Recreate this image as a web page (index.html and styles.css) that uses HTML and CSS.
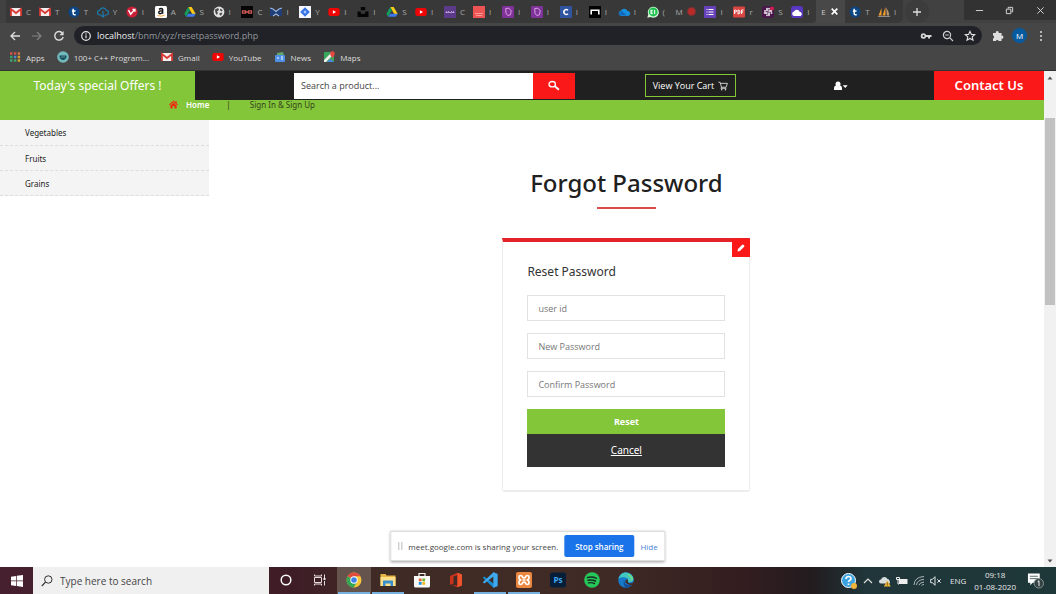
FILE: index.html
```html
<!DOCTYPE html>
<html lang="en">
<head>
<meta charset="utf-8">
<meta name="viewport" content="width=device-width, initial-scale=1">
<title>Forgot Password</title>
<link rel="stylesheet" href="styles.css">
</head>
<body>
<svg class="defs" aria-hidden="true">
  <symbol id="gmail" viewBox="0 0 12 12"><rect x="1" y="2" width="10" height="8" rx="1" fill="#f4eeee"/><path d="M1 10V3l5 4 5-4v7" fill="none" stroke="#d93a36" stroke-width="1.8"/></symbol>
  <symbol id="tcircle" viewBox="0 0 12 12"><circle cx="6" cy="6" r="5.5" fill="#0d4685"/><path d="M5.2 2.8v4.7q0 1.3 1.3 1.3h1.2M3.9 5h3.6" fill="none" stroke="#fff" stroke-width="1.5"/></symbol>
  <symbol id="clouddown" viewBox="0 0 12 12"><path d="M4 9H3a2.4 2.4 0 0 1-.2-4.8 3.3 3.3 0 0 1 6.3 0A2.4 2.4 0 0 1 9 9H8M6 5v6M4.3 9.3 6 11l1.7-1.7" fill="none" stroke="#1a80b6" stroke-width="1.1"/></symbol>
  <symbol id="vred" viewBox="0 0 12 12"><circle cx="6" cy="6" r="5.6" fill="#c91f37"/><path d="m2.5 4.2 2.2 4 4-4.8M6.500 3.400h2.400v2.400" fill="none" stroke="#fff" stroke-width="1.4"/></symbol>
  <symbol id="amazon" viewBox="0 0 12 12"><rect width="12" height="12" rx="1.5" fill="#fff"/><path d="M4 3.400Q6.500 1.500 7.600 3.300v4.500M7.500 4.800q-4-.2-3.700 1.900.7 2 3.700-.2" fill="none" stroke="#111" stroke-width="1.5"/><path d="M2.500 9.500q3.500 1.500 7-.2" fill="none" stroke="#f29a22" stroke-width=".9"/></symbol>
  <symbol id="drive" viewBox="0 0 12 12"><path d="M4.200 1h3.500l4 7H8.200z" fill="#fbc916"/><path d="M4.200 1 .3 7.700l1.800 3.100L6 4.200z" fill="#159a5b"/><path d="M4.200 7.700h7.500l-1.800 3.100H2.100z" fill="#3c78e8"/></symbol>
  <symbol id="globe" viewBox="0 0 12 12"><circle cx="6" cy="6" r="5.4" fill="#e1e1e1"/><path d="M2 3.500 5 2l1 2-2 1.500L5 7 3.700 9 2.300 6.500zM7 2.500 9.700 4 8.800 5.500 7.300 4.700zM6.500 7 9.500 6.700 8 9.700 6.700 9z" fill="#48494a"/></symbol>
  <symbol id="blackred" viewBox="0 0 12 12"><rect width="12" height="12" fill="#050505"/><path d="M1.500 4.900h3v2.200h-3zM7.500 4.900h3v2.200h-3zM4.500 6h3" fill="none" stroke="#cf5b57" stroke-width="1.3"/></symbol>
  <symbol id="bluefold" viewBox="0 0 12 12"><path d="M0 2h2l4 3 4-3h2v8H8L6 8l-2 2H0z" fill="#203e77"/><path d="m0 2 3 1 3 2.500L9 3l3-1M3 10l3-2 3 2" fill="none" stroke="#9fb8de" stroke-width="1.1"/></symbol>
  <symbol id="jira" viewBox="0 0 12 12"><rect width="12" height="12" fill="#f4f7ff"/><path d="m6 1.200 4.800 4.800L6 10.800 1.200 6z" fill="#3472e4"/><path d="m6 4.300 1.700 1.700L6 7.700 4.300 6z" fill="#a9c6ff"/></symbol>
  <symbol id="youtube" viewBox="0 0 12 12"><rect x="0.300" y="2" width="11.400" height="8" rx="2" fill="#f00505"/><path d="m4.900 4.200 3.200 1.800-3.200 1.800z" fill="#fff"/></symbol>
  <symbol id="unsplash" viewBox="0 0 12 12"><path d="M3.800 1h4.400v3.300H3.800zM.5 5.400h3.300v2.300h4.400V5.400h3.300V11H.5z" fill="#050505"/></symbol>
  <symbol id="purple" viewBox="0 0 12 12"><rect width="12" height="12" fill="#5b3b89"/><path d="M1.500 6.500h9M2 5.500h1m1 0h1m2 0h1m1 0h1" stroke="#b39bd2" stroke-width="1.2"/></symbol>
  <symbol id="redsheet" viewBox="0 0 12 12"><rect width="12" height="12" fill="#ef5455"/><path d="M2 7.500h8M3 9.500h6" stroke="#ff9a98"/></symbol>
  <symbol id="bookmark" viewBox="0 0 12 12"><rect width="12" height="12" rx="1" fill="#7f3298"/><path d="m3.700 2.500 3.200-.3 2.300 2.600-.7 4-2.700.7-1.800-2.300z" fill="none" stroke="#dba1e8"/></symbol>
  <symbol id="cblue" viewBox="0 0 12 12"><rect width="12" height="12" rx="1" fill="#3154a1"/><path d="M8 4.300a2.400 2.400 0 1 0 0 3.400" fill="none" stroke="#fff" stroke-width="1.5"/></symbol>
  <symbol id="arch" viewBox="0 0 12 12"><rect width="12" height="12" fill="#030303"/><path d="M2.200 8.600V4.300h7.600v4.300" fill="none" stroke="#fff" stroke-width="1.6"/></symbol>
  <symbol id="onedrive" viewBox="0 0 12 12"><path d="M2.800 10a2.700 2.700 0 0 1 0-5.300A3.700 3.700 0 0 1 9.500 5 2.500 2.500 0 0 1 9.700 10z" fill="#168fdf"/><path d="m4 5 5 4.500H3A2.400 2.400 0 0 1 1 7z" fill="#1368bb"/></symbol>
  <symbol id="whatsapp" viewBox="0 0 12 12"><path d="m.3 11.700 1-3.200A5.500 5.500 0 1 1 3.500 11z" fill="#d9f9dc"/><circle cx="6.200" cy="5.900" r="4.500" fill="#20c251"/><path d="M4 4v4M4 4.300h1.700M4 6h1.500M4 7.700h1.700M7.700 4v4" stroke="#fff"/></symbol>
  <symbol id="list" viewBox="0 0 12 12"><rect width="12" height="12" rx="1" fill="#6540b8"/><path d="M2.500 3.500h1m1 0h5m-7 2.500h1m1 0h5m-7 2.500h1m1 0h5" stroke="#fff" stroke-width="1.2"/></symbol>
  <symbol id="pdf" viewBox="0 0 12 12"><rect y=".5" width="12" height="11" rx="1" fill="#d94542"/><path d="M1.600 8V4h1q1 .1 1 1t-1 1h-1M5 4v4q2 0 2-2T5 4M8.600 8V4h2m-2 2h1.500" fill="none" stroke="#fff"/></symbol>
  <symbol id="slack" viewBox="0 0 12 12"><rect width="12" height="12" rx="3" fill="#4a154b"/><circle cx="10" cy="2.500" r="2" fill="#d51f4a"/><path d="M5 2.500v2.300M2.500 7H5M7 9.500V7M9.500 5H7M2.700 4.900h.6M7 2.500v.6M9.200 7h.5M5 9v.5" stroke="#fff" stroke-width="1.500" stroke-linecap="round"/></symbol>
  <symbol id="pcloud" viewBox="0 0 12 12"><rect width="12" height="12" rx="3" fill="#5937c2"/><path d="M3 10a2.300 2.300 0 0 1 0-4.500 3 3 0 0 1 5.600.3A2.200 2.200 0 0 1 9.500 10z" fill="#fff"/></symbol>
  <symbol id="sails" viewBox="0 0 12 12"><path d="M3.500 2v7.500H.5zM7.500 1v8.500h-3z" fill="#f49c28"/><path d="M8.300 1.500q2.500 4 3 8H8.800z" fill="#b99874"/><path d="M0 10.500h12" stroke="#8e8e8e"/></symbol>
</svg>

<header class="browser">
  <div class="tabstrip">
    <div class="tabs">
      <div class="tab"><svg><use href="#gmail"/></svg><span>C</span></div>
      <div class="tab"><svg><use href="#gmail"/></svg><span>T</span></div>
      <div class="tab"><svg><use href="#tcircle"/></svg><span>T</span></div>
      <div class="tab"><svg><use href="#clouddown"/></svg><span>Y</span></div>
      <div class="tab"><svg><use href="#vred"/></svg><span>I</span></div>
      <div class="tab"><svg><use href="#amazon"/></svg><span>A</span></div>
      <div class="tab"><svg><use href="#drive"/></svg><span>S</span></div>
      <div class="tab"><svg><use href="#globe"/></svg><span>I</span></div>
      <div class="tab"><svg><use href="#blackred"/></svg><span>C</span></div>
      <div class="tab"><svg><use href="#bluefold"/></svg><span>I</span></div>
      <div class="tab"><svg><use href="#jira"/></svg><span>Y</span></div>
      <div class="tab"><svg><use href="#youtube"/></svg><span>I</span></div>
      <div class="tab"><svg><use href="#unsplash"/></svg><span>I</span></div>
      <div class="tab"><svg><use href="#drive"/></svg><span>S</span></div>
      <div class="tab"><svg><use href="#youtube"/></svg><span>I</span></div>
      <div class="tab"><svg><use href="#purple"/></svg><span>C</span></div>
      <div class="tab"><svg><use href="#redsheet"/></svg><span>I</span></div>
      <div class="tab"><svg><use href="#bookmark"/></svg><span>I</span></div>
      <div class="tab"><svg><use href="#bookmark"/></svg><span>I</span></div>
      <div class="tab"><svg><use href="#cblue"/></svg><span>I</span></div>
      <div class="tab"><svg><use href="#arch"/></svg><span>I</span></div>
      <div class="tab"><svg><use href="#onedrive"/></svg><span>I</span></div>
      <div class="tab"><svg><use href="#whatsapp"/></svg><span>(</span></div>
      <div class="tab"><span>M</span><i class="recording"></i></div>
      <div class="tab"><svg><use href="#list"/></svg><span>I</span></div>
      <div class="tab"><svg><use href="#pdf"/></svg><span>r</span></div>
      <div class="tab"><svg><use href="#slack"/></svg><span>S</span></div>
      <div class="tab last"><svg><use href="#pcloud"/></svg><span>I</span></div>
      <div class="tab active"><span>E</span><button class="close" aria-label="Close tab"><svg viewBox="0 0 8 8"><path d="m1.500 1.500 5 5m0-5-5 5" fill="none" stroke="#fff" stroke-width="1.500"/></svg></button></div>
      <div class="tab"><svg><use href="#tcircle"/></svg><span>T</span></div>
      <div class="tab last"><svg><use href="#sails"/></svg><span>I</span></div>
    </div>
    <button class="newtab" aria-label="New tab"><svg viewBox="0 0 10 10"><path d="M5 1v8M1 5h8" stroke="#ddd" stroke-width="1.300"/></svg></button>
    <div class="window-controls">
      <button aria-label="Minimize"><svg viewBox="0 0 10 10"><path d="M1 5h8" stroke="#ddd"/></svg></button>
      <button aria-label="Restore"><svg viewBox="0 0 10 10"><path d="M1.500 3.500h5v5h-5zM3.500 3V1.500h5v5H7" fill="none" stroke="#e2e2e2"/></svg></button>
      <button aria-label="Close"><svg viewBox="0 0 10 10"><path d="m1.500 1.500 7 7m0-7-7 7" stroke="#e2e2e2"/></svg></button>
    </div>
  </div>
  <div class="toolbar">
    <button aria-label="Back"><svg viewBox="0 0 12 12"><path d="M11 6H2m4-4L2 6l4 4" fill="none" stroke="#dedede" stroke-width="1.300"/></svg></button>
    <button aria-label="Forward"><svg viewBox="0 0 12 12"><path d="M1 6h9M6 2l4 4-4 4" fill="none" stroke="#818181" stroke-width="1.200"/></svg></button>
    <button aria-label="Reload"><svg viewBox="0 0 12 12"><path d="M9.500 3.200A4.300 4.300 0 1 0 10.200 7" fill="none" stroke="#dedede" stroke-width="1.400"/><path d="M10.600 1v4.200H6.400z" fill="#dedede"/></svg></button>
    <div class="address">
      <svg viewBox="0 0 12 12"><circle cx="6" cy="6" r="4.300" fill="none" stroke="#e6e6e6" stroke-width="1.200"/><path d="M6 5.300v3M6 3.300v1.200" stroke="#e6e6e6" stroke-width="1.200"/></svg>
      <span class="url"><b>localhost</b>/bnm/xyz/resetpassword.php</span>
      <button aria-label="Passwords"><svg viewBox="0 0 12 12"><path d="M3.500 3.200a2.800 2.800 0 1 0 2.600 3.700H8v1.700h2V6.900h1.500V5.100H6.100a2.800 2.800 0 0 0-2.600-1.900zm0 1.800a1 1 0 1 1 0 2 1 1 0 0 1 0-2z" fill="#d6d6d6"/></svg></button>
      <button aria-label="Zoom"><svg viewBox="0 0 12 12"><circle cx="5" cy="5" r="3.600" fill="none" stroke="#d0d0d0" stroke-width="1.200"/><path d="m7.700 7.700 3.300 3.300M3.300 5h3.400" stroke="#d0d0d0" stroke-width="1.200"/></svg></button>
      <button aria-label="Bookmark"><svg viewBox="0 0 12 12"><path d="m6 1.400 1.400 3 3.300.3-2.500 2.200.8 3.300L6 8.500l-3 1.700.8-3.300-2.500-2.200 3.300-.3z" fill="none" stroke="#e3e3e3" stroke-width="1.100"/></svg></button>
    </div>
    <button aria-label="Extensions"><svg viewBox="0 0 12 12"><path d="M1 3h2.800a1.500 1.500 0 1 1 2.900 0H9.500v2.700a1.500 1.500 0 1 1 0 2.900V11H6.800a1.600 1.600 0 0 0-3 0H1V8.400a1.500 1.500 0 0 0 0-2.900z" fill="#dedede"/></svg></button>
    <button class="profile" aria-label="Profile">M</button>
    <button aria-label="Menu"><svg viewBox="0 0 12 12"><g fill="#dedede"><circle cx="6" cy="2" r="1"/><circle cx="6" cy="6" r="1"/><circle cx="6" cy="10" r="1"/></g></svg></button>
  </div>
  <nav class="bookmarks" aria-label="Bookmarks">
    <a href="#apps"><svg viewBox="0 0 12 12"><path d="M1 2.500h2.500" stroke="#dc5146" stroke-width="2.400"/><path d="M4.900 2.500h2.400" stroke="#dc5146" stroke-width="2.400"/><path d="M8.700 2.500h2.400" stroke="#dc7546" stroke-width="2.400"/><path d="M1 6h2.500" stroke="#31a66a" stroke-width="2.400"/><path d="M4.900 6h2.400" stroke="#5086d4" stroke-width="2.400"/><path d="M8.700 6h2.400M8.700 9.500h2.400" stroke="#d5a22f" stroke-width="2.400"/><path d="M1 9.500h2.500M4.900 9.500h2.400" stroke="#44a26c" stroke-width="2.400"/></svg>Apps</a>
    <a href="#programs"><svg viewBox="0 0 12 12"><circle cx="6" cy="6" r="5.800" fill="#72b9bd"/><path d="M2.500 4.500h7v1.200Q8.500 9 6 9T2.500 5.700z" fill="#174e5b"/><path d="M4 6h4" stroke="#5b949c"/></svg>100+ C++ Program...</a>
    <a href="#gmail-link"><svg><use href="#gmail"/></svg>Gmail</a>
    <a href="#youtube-link"><svg><use href="#youtube"/></svg>YouTube</a>
    <a href="#news"><svg viewBox="0 0 12 12"><path d="m3 2 6-1 1 4H3z" fill="#63a66b"/><rect x="1" y="4" width="10" height="7" rx="1" fill="#4f8fe6"/><path d="M3 7h2m2-1h2M7 8h2" stroke="#fff"/></svg>News</a>
    <a href="#maps"><svg viewBox="0 0 12 12"><rect x="1" y="1" width="10" height="10" rx="1" fill="#38a65c"/><path d="m1 9 8-8 2 2-8 8H1z" fill="#eeeeea"/><path d="m4 11 3-3 4 3z" fill="#4c86e2"/><path d="M9.500 7Q7 4 7 2.700a2.400 2.400 0 0 1 4.800 0Q11.800 4 9.500 7" fill="#e54840"/></svg>Maps</a>
  </nav>
</header>

<div class="viewport">
  <div class="site">
    <header class="topbar">
      <a class="offers" href="#offers">Today's special Offers !</a>
      <form class="search" role="search">
        <input type="search" aria-label="Search a product" placeholder="Search a product...">
        <button type="button" aria-label="Search"><svg viewBox="0 0 12 12"><ellipse cx="4.200" cy="4.200" rx="3.200" ry="2.700" fill="none" stroke="#fff" stroke-width="1.300"/><path d="m6.600 6 4.300 3.800" stroke="#fff" stroke-width="1.900"/></svg></button>
      </form>
      <button class="cart">View Your Cart <svg viewBox="0 0 12 12"><path d="M.5 1.500h2l1.700 6h5.500l1.600-4.700H3M4.200 7.500l-.8 1.300h6.700" fill="none" stroke="#e8e8e8"/><circle cx="4.500" cy="10.400" r=".9" fill="#e8e8e8"/><circle cx="9" cy="10.400" r=".9" fill="#e8e8e8"/></svg></button>
      <button class="account" aria-label="Account"><svg viewBox="0 0 14 10"><circle cx="4" cy="3" r="2.500" fill="#fff"/><path d="M0 9V7q0-2.300 2-2.500 2 1.600 4 0 2 .2 2 2.500v2zM8.700 4.200h5l-2.500 2.700z" fill="#fff"/></svg></button>
      <a class="contact" href="#contact">Contact Us</a>
    </header>
    <nav class="crumbs" aria-label="Breadcrumb">
      <svg viewBox="0 0 10 9"><path d="M5 0 0 4.500l.8.8L5 1.600l4.200 3.700.8-.8L8.500 3V.6H7.200v1.300zM1.500 5.500 5 2.500l3.500 3V9H6V6.300H4V9H1.500z" fill="#ef2812"/></svg>
      <a class="home" href="#home">Home</a><span class="divider">|</span><a href="#signin">Sign In &amp; Sign Up</a>
    </nav>
    <div class="columns">
      <nav class="categories" aria-label="Categories">
        <a href="#vegetables">Vegetables</a>
        <a href="#fruits">Fruits</a>
        <a href="#grains">Grains</a>
      </nav>
      <main>
        <h1>Forgot Password</h1>
        <section class="card">
          <span class="edit"><svg viewBox="0 0 10 10"><path d="m.7 9.300.5-3L6.500 1q.8-.7 1.500 0L9 2q.7.800 0 1.500L3.700 8.800z" fill="#fff"/></svg></span>
          <h2>Reset Password</h2>
          <form>
            <input type="text" aria-label="user id" placeholder="user id">
            <input type="password" aria-label="New Password" placeholder="New Password">
            <input type="password" aria-label="Confirm Password" placeholder="Confirm Password">
            <button class="reset" type="button">Reset</button>
            <div class="cancel"><a href="#cancel">Cancel</a></div>
          </form>
        </section>
      </main>
    </div>
  </div>
  <div class="scrollbar" aria-hidden="true">
    <svg viewBox="0 0 6 6"><path d="m.5 4.500 2.500-3 2.500 3z" fill="#505050"/></svg>
    <div class="track"><div class="thumb"></div></div>
    <svg viewBox="0 0 6 6"><path d="m.5 1.500 2.500 3 2.500-3z" fill="#505050"/></svg>
  </div>
  <div class="sharing" role="status">
    <i class="grip"></i><span>meet.google.com is sharing your screen.</span>
    <button class="stop">Stop sharing</button><button class="hide">Hide</button>
  </div>
</div>

<footer class="taskbar">
  <button class="start" aria-label="Start"><svg viewBox="0 0 12 12"><path d="m0 1.700 5.200-.8v4.700H0zM5.900.8 12 0v5.600H5.900zM0 6.300h5.200V11L0 10.300zM5.900 6.300H12V12l-6.100-.9z" fill="#fff"/></svg></button>
  <label class="tasksearch"><svg viewBox="0 0 12 12"><circle cx="7.300" cy="4.500" r="3.700" fill="none" stroke="#303030"/><path d="M4.500 7.200.8 11" stroke="#303030" stroke-width="1.200"/></svg><input type="search" aria-label="Type here to search" placeholder="Type here to search"></label>
  <div class="apps">
    <button aria-label="Cortana"><svg viewBox="0 0 16 16"><circle cx="8" cy="8" r="4.800" fill="none" stroke="#fff" stroke-width="1.500"/></svg></button>
    <button aria-label="Task View"><svg viewBox="0 0 16 16"><path d="M2.500 5.500h7v5h-7zM2.500 2.500v1.500h7V2.500M2.500 13.500V12h7v1.500M12.500 2.500V6m0 3v4.500" fill="none" stroke="#e8dddd"/><path d="M11.500 6h2v2h-2z" fill="#eee"/></svg></button>
    <button class="open selected" aria-label="Chrome"><svg viewBox="0 0 16 16"><circle cx="8" cy="8" r="7.500" fill="#f6c638"/><path d="M8 8 1.500 4.300A7.500 7.500 0 0 1 14.500 4.300H8z" fill="#df4c3e"/><path d="M1.500 4.300A7.500 7.500 0 0 0 7.700 15.500L11 10z" fill="#34a657"/><circle cx="8" cy="8" r="3.700" fill="#fff"/><circle cx="8" cy="8" r="2.800" fill="#3c80e8"/></svg></button>
    <button class="open" aria-label="File Explorer"><svg viewBox="0 0 16 16"><path d="M.5 2h5l1 1.500h9V14H.5z" fill="#e6b642"/><path d="M.5 5h15v9H.5z" fill="#ffe08a"/><path d="M3 14V8.500h10V14h-2.500v-2.500h-5V14z" fill="#3690ce"/></svg></button>
    <button aria-label="Store"><svg viewBox="0 0 16 16"><path d="M5 5V1.500h6V5" fill="none" stroke="#f4f4f4" stroke-width="1.200"/><path d="M0 4h16v10q0 1.500-1.500 1.500h-13Q0 15.500 0 14z" fill="#fafafa"/><path d="M4.800 6.500h2.800v2.800H4.800z" fill="#e95e31"/><path d="M8.300 6.500h2.800v2.800H8.300z" fill="#71b62c"/><path d="M4.800 10h2.800v2.800H4.800z" fill="#1a93df"/><path d="M8.300 10h2.800v2.800H8.300z" fill="#f6b91d"/></svg></button>
    <button aria-label="Office"><svg viewBox="0 0 16 16"><path d="M9.500.8 14 2.500v11l-4.500 1.700-6-2.200 5.700.5V3.300L5.500 4.500v7L2 13V4z" fill="#c9321b"/><path d="m9.500.8 4.500 1.700v11l-4.500 1.700z" fill="#ee552b"/></svg></button>
    <button class="open" aria-label="Visual Studio Code"><svg viewBox="0 0 16 16"><path d="m11.500.3 4 1.700v12l-4 1.700L.7 5.800 2.300 4.500l9.200 7z" fill="#168bd2"/><path d="m11.500.3 4 1.700v12l-4 1.700V4.500l-9.200 7L.7 10.200z" fill="#40a9ed"/></svg></button>
    <button class="open" aria-label="XAMPP"><svg viewBox="0 0 16 16"><rect width="16" height="16" rx="2" fill="#ec8740"/><path d="M3 6V5q0-1.500 1.500-1.500T6.500 5q.5 1 1.500 1t1.500-1q.5-1.500 2-1.500T13 5v1q0 1-1.500 2Q13 9 13 10v1q0 1.500-1.500 1.500t-2-1.500q-.5-1-1.500-1t-1.500 1q-.5 1.500-2 1.500T3 11v-1q0-1 1.500-2Q3 7 3 6M6.500 8h3" fill="none" stroke="#fff" stroke-width="1.700"/></svg></button>
    <button aria-label="Photoshop"><svg viewBox="0 0 16 16"><rect y=".5" width="16" height="15" rx="2.500" fill="#061e38"/><text class="pslabel" x="8" y="11" text-anchor="middle">Ps</text></svg></button>
    <button aria-label="Spotify"><svg viewBox="0 0 16 16"><circle cx="8" cy="8" r="7.800" fill="#27c65a"/><path d="M3.500 5.500q4.800-1.300 9 .8M4 8.300q4-1 7.500.7M4.500 10.900q3.200-.8 6 .6" fill="none" stroke="#172f20" stroke-width="1.400" stroke-linecap="round"/></svg></button>
    <button aria-label="Edge"><svg viewBox="0 0 16 16"><circle cx="8" cy="8" r="7.800" fill="#1679c9"/><path d="M.5 6.500C2 1 7-.8 11 1.200c4 1.800 5.800 6.300 3.300 8.400-1.500 1.200-5 .9-4.300-1C11 6 5.500 3.500.5 6.500" fill="#42c7c0"/><path d="M10 2.800q4 1.500 4 5.500" fill="none" stroke="#66d987" stroke-width="2"/><path d="M6.500 8q-1 4.500 4 5 2 .1 3.800-1-2 3.500-6.300 3.800Q4 12.500 6.500 8" fill="#124e9b"/><path d="M9.500 7.300q1 .8.200 2-.2 1.800 2.300 2.200l4-1v2.500q-5 1-8.300-2.200-1.200-2.200 1.800-3.500" fill="#47291f"/></svg></button>
  </div>
  <div class="tray">
    <svg class="help" viewBox="0 0 16 16"><circle cx="7.500" cy="7.500" r="7" fill="#3aa2e0" stroke="#fff"/><path d="M5 6q.2-2.500 2.500-2.500T10 5.700q0 1.200-1.500 1.800-1 .4-1 1.600M7.500 10.500V12" fill="none" stroke="#fff" stroke-width="1.700"/><circle cx="13" cy="13" r="3" fill="#efb33c"/></svg>
    <svg viewBox="0 0 12 12"><path d="m2 8 4-4 4 4" fill="none" stroke="#ddd" stroke-width="1.200"/></svg>
    <svg viewBox="0 0 12 12"><path d="M2 8.500a2 2 0 0 1 0-4 3.500 3.500 0 0 1 6.500-.5Q11 4 11 8.500z" fill="#d7dddd"/><path d="m8.300 5.500 3.500 6H4.800z" fill="#efb635"/><path d="M8.300 7.500v3" stroke="#7d601c"/></svg>
    <svg viewBox="0 0 12 12"><path d="M3 4h8.500v5H3z" fill="#eee"/><path d="M.5 2.500h3v2h-3zM2 4.500V9h1" fill="none" stroke="#eee"/></svg>
    <svg viewBox="0 0 12 12"><path d="M1 10Q1.500 2 11 1.500M3.500 10Q4 5 11 4.300M6 10.200Q6.500 7.500 11 7M8.500 10.500Q9 9.700 11 9.500" fill="none" stroke="#abb6b7"/></svg>
    <svg viewBox="0 0 12 12"><path d="M.7 4.300h1.800L5 1.700v8.600L2.500 7.700H.7zM7.300 4.300l3.400 3.400m0-3.400L7.300 7.700" fill="none" stroke="#e0e5e5"/></svg>
    <span class="lang">ENG</span>
    <time datetime="2020-08-01T09:18"><span>09:18</span><span>01-08-2020</span></time>
    <svg class="notice" viewBox="0 0 18 18"><path d="M1 1.500h12.500v10H6L3.500 14v-2.500H1z" fill="#fff"/><path d="M3 4.500h8.500M3 7h8.500" stroke="#53605f"/><circle cx="12.500" cy="12" r="5" fill="#344244" stroke="#8b9494"/><path d="m11.200 10.300 1.500-1V15" fill="none" stroke="#fff"/></svg>
  </div>
</footer>
</body>
</html>
```
FILE: styles.css
```css
* { box-sizing: border-box; }
body {
  margin: 0;
  min-height: 100vh;
  display: flex;
  flex-direction: column;
  background: #fff;
  color: #222;
  font-family: "Noto Sans", "Open Sans", sans-serif;
  font-size: 9px;
}
button, input { font: inherit; border: 0; border-radius: 0; padding: 0; margin: 0; }
button { background: none; display: grid; place-items: center; color: inherit; }
a { color: inherit; text-decoration: none; }
svg { display: block; flex: none; width: 12px; height: 12px; }
h1, h2 { margin: 0; font-weight: 400; }
.defs { position: absolute; width: 0; height: 0; }

/* Browser frame */
.browser { background: #464646; color: #ddd; font-family: "Open Sans", sans-serif; }
.tabstrip { display: flex; height: 23px; padding-left: 6px; background: #414141; }
.tabs { flex: 1; min-width: 0; display: grid; grid-template-columns: repeat(31, minmax(0, 1fr)); }
.tab { display: flex; align-items: center; gap: 4px; padding-left: 4px; background: #383838; }
.tab::after { content: ""; width: 1px; height: 14px; background: #6b6b6b; margin-left: auto; margin-right: -1px; flex: none; }
.tab span { color: #aaa; font-size: 8px; line-height: 12px; flex: none; margin-right: -4px; }
.tab .recording { margin-left: 4px; }
.tab.last { border-radius: 0 0 5px 0; }
.tab.active { background: #484848; padding-left: 5px; }
.tab.active span { color: #ccc; margin-right: 0; }
.tab.last::after, .tab.active::after { display: none; }
.close svg { width: 9px; height: 9px; }
.recording { width: 9px; height: 9px; border-radius: 50%; background: #b92b2b; border: 1px solid #7d3030; }
.newtab { width: 24px; margin: 0 35px 0 2px; background: #3c3c3c; border-radius: 12px; }
.newtab svg { width: 10px; height: 10px; }
.window-controls { width: 92px; height: 20px; display: grid; grid-template-columns: repeat(3, 1fr); background: #323232; }
.window-controls svg { width: 9px; height: 9px; }
.toolbar { display: flex; align-items: center; gap: 10px; height: 25px; padding: 0 9px; }
.toolbar > .address { margin: 0 0 0 -1px; }
.address { flex: 1; display: flex; align-items: center; gap: 10px; height: 19px; padding: 0 6px; border-radius: 10px; background: #202227; }
.address > svg { margin-right: -5px; }
.url { flex: 1; color: #92969b; font-size: 9px; line-height: 14px; }
.url b { color: #eee; font-weight: 400; }
.profile { width: 15px; height: 15px; margin: 0 -2px; border-radius: 50%; background: #075a9e; color: #fff; font-size: 8px; }
.bookmarks { display: flex; align-items: center; gap: 12px; height: 23px; padding: 0 9px 4px; font-size: 8px; border-bottom: 1px solid #333; }
.bookmarks a { display: flex; align-items: center; gap: 5px; }

/* Shop page */
.viewport { flex: 1; display: flex; position: relative; }
.site { flex: 1; min-width: 0; }
.topbar {
  display: grid;
  grid-template-columns: minmax(0, 195fr) minmax(0, 99fr) minmax(0, 281fr) minmax(0, 70fr) minmax(0, 91fr) minmax(0, 98fr) minmax(0, 14fr) minmax(0, 86fr) minmax(0, 110fr);
  align-items: center;
  height: 29px;
  background: #202020;
  color: #fff;
}
.offers { grid-column: 1; height: 29px; line-height: 29px; text-align: center; background: #84c639; font-size: 12px; }
.search { grid-column: 3; display: flex; height: 26px; }
.search input { flex: 1; min-width: 0; padding: 0 7px; background: #fff; font-family: "Open Sans", sans-serif; font-size: 9px; }
.search input::placeholder { color: #444; opacity: 1; }
.search button { width: 42px; background: #fa1818; }
.cart { grid-column: 5; display: flex; align-items: center; justify-content: center; gap: 4px; height: 23px; border: 1px solid #84c639; font-family: "Open Sans", sans-serif; font-size: 9px; white-space: nowrap; }
.cart svg { width: 10px; height: 10px; }
.account { grid-column: 7; }
.account svg { width: 14px; height: 10px; }
.contact { grid-column: 9; height: 29px; line-height: 29px; text-align: center; background: #fa1818; font-size: 13px; font-weight: 600; }
.crumbs { display: flex; height: 20px; padding-left: 169px; background: #84c639; color: #354320; font-size: 8px; line-height: 10px; }
.crumbs svg { width: 9px; height: 9px; margin-right: 8px; }
.home { color: #fff; font-weight: 600; }
.divider { margin: 0 19px 0 17px; }
.columns { display: flex; }
.categories { flex: 0 0 20%; align-self: flex-start; background: #f4f4f4; font-size: 8px; }
.categories a { display: block; height: 25px; padding-left: 25px; line-height: 25px; border-bottom: 1px dashed #ddd; }
.categories a:first-child { height: 26px; }
main { flex: 1; display: flex; flex-direction: column; align-items: center; padding: 45px 16px 40px; }
h1 { font-size: 24px; font-weight: 500; line-height: 36px; color: #202020; }
h1::after { content: ""; display: block; width: 59px; height: 2px; margin: 6px auto 0; background: #d94a4a; }
.card { position: relative; width: 248px; max-width: 100%; margin-top: 29px; padding: 21px 24px 23px; border: 1px solid #ececec; border-top: 4px solid #e42528; border-radius: 0 0 2px 2px; box-shadow: 0 1px 1px #eee; }
.edit { position: absolute; top: -3px; right: -1px; display: grid; place-items: center; width: 18px; height: 18px; background: #fa1818; }
.edit svg { width: 8px; height: 8px; }
h2 { font-size: 12px; line-height: 18px; color: #333; }
.card form { margin-top: 14px; }
.card input { display: block; width: 100%; height: 26px; margin-bottom: 12px; padding: 0 10px; border: 1px solid #e2e2e2; font-family: "Open Sans", sans-serif; font-size: 9px; background: #fff; }
.card input::placeholder { color: #777; opacity: 1; }
.reset { width: 100%; height: 25px; background: #84c639; color: #fff; font-family: "Open Sans", sans-serif; font-weight: 700; }
.cancel { height: 33px; line-height: 33px; text-align: center; background: #333; color: #fff; font-size: 10px; }
.cancel a { text-decoration: underline; }

.scrollbar { flex: none; display: flex; flex-direction: column; align-items: center; width: 12px; padding: 4px 0 3px; background: #f1f1f1; }
.scrollbar svg { width: 6px; height: 6px; }
.track { flex: 1; width: 10px; padding-top: 37px; }
.thumb { height: 187px; background: #c1c1c1; }

.sharing { position: absolute; left: 50%; bottom: 6px; transform: translateX(-50%); display: flex; align-items: center; gap: 6px; height: 30px; padding: 0 7px; background: #fff; border: 1px solid #ddd; box-shadow: 0 1px 3px #999; font-family: "Open Sans", sans-serif; font-size: 8px; white-space: nowrap; color: #444; }
.grip { width: 4px; height: 8px; border: solid #bbb; border-width: 0 1px; }
.stop { height: 22px; width: 70px; border-radius: 2px; background: #1a73e8; color: #fff; font-weight: 600; }
.hide { color: #4b83d6; }

/* Desktop taskbar */
.taskbar { display: flex; height: 27px; background: linear-gradient(90deg, #46202e, #3f1d26 28%, #3f2b25 36%, #402a25 58%, #341d1f 70%, #221c1f 77%, #20363a 82%, #1e3739); color: #e8e8e8; font-family: "Open Sans", sans-serif; }
.start { width: 33px; }
.tasksearch { width: 236px; display: flex; align-items: center; gap: 7px; padding-left: 8px; background: #f0f0f0; }
.tasksearch input { flex: 1; min-width: 0; background: none; font-size: 10px; }
.tasksearch input::placeholder { color: #444; opacity: 1; }
.apps { display: grid; grid-template-columns: repeat(11, 34px); }
.apps button { border-bottom: 2px solid transparent; }
.apps svg { width: 16px; height: 16px; }
.apps .open { border-image: linear-gradient(90deg, transparent 3px, #76b1df 3px, #76b1df 31px, transparent 31px) 2; border-style: solid; border-width: 0 0 2px; }
.apps .selected { background: #65544d; }
.pslabel { fill: #42a9f5; font-size: 8px; font-weight: 700; }
.tray { flex: 1; display: flex; align-items: center; justify-content: flex-end; gap: 5px; padding-right: 12px; font-size: 8px; }
.help { width: 16px; height: 16px; }
.lang { margin: 0 3px 0 3px; }
time { display: grid; text-align: center; line-height: 12px; margin-right: 6px; }
.notice { width: 17px; height: 17px; }
```
